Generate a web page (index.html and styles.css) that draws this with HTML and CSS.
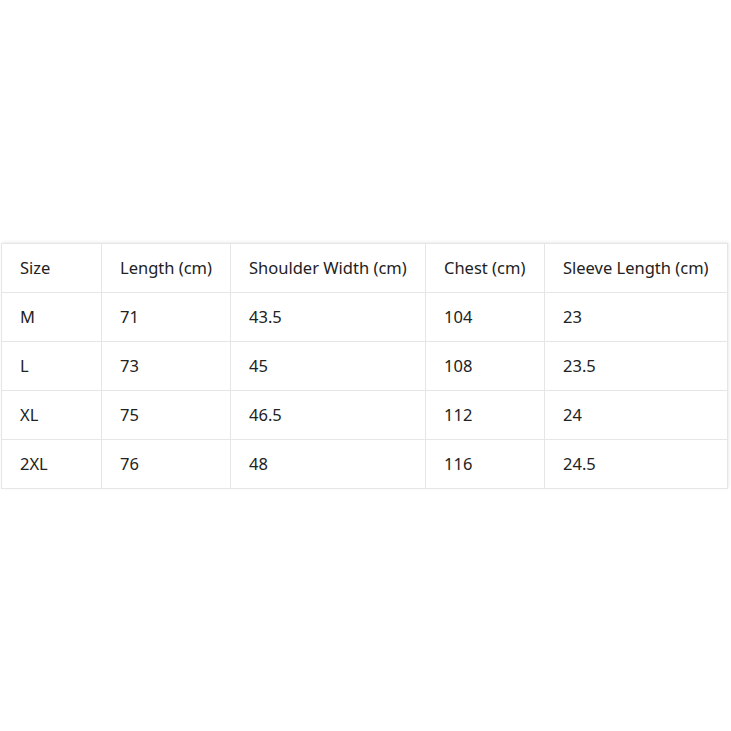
FILE: index.html
```html
<!DOCTYPE html>
<html>
<head>
<meta charset="utf-8">
<link rel="stylesheet" href="styles.css">
</head>
<body>
<div class="page">
  <table class="size-table">
    <tr><td class="c1">Size</td><td class="c2">Length (cm)</td><td class="c3">Shoulder Width (cm)</td><td class="c4">Chest (cm)</td><td class="c5">Sleeve Length (cm)</td></tr>
    <tr><td>M</td><td>71</td><td>43.5</td><td>104</td><td>23</td></tr>
    <tr><td>L</td><td>73</td><td>45</td><td>108</td><td>23.5</td></tr>
    <tr><td>XL</td><td>75</td><td>46.5</td><td>112</td><td>24</td></tr>
    <tr><td>2XL</td><td>76</td><td>48</td><td>116</td><td>24.5</td></tr>
  </table>
</div>
</body>
</html>
```
FILE: styles.css
```css
html, body {
  margin: 0;
  padding: 0;
  background: #fff;
}
.page {
  width: 731px;
  height: 731px;
  display: flex;
  align-items: center;
  padding: 0 4px 0 1px;
  box-sizing: border-box;
}
.size-table {
  border-collapse: collapse;
  width: 726px;
  table-layout: fixed;
  font-family: "Noto Sans", sans-serif;
  font-size: 16.5px;
  color: #222;
  box-shadow: 1px -1px 3px rgba(0,0,0,0.08);
}
.size-table td {
  border: 1px solid #e6e6e6;
  height: 49px;
  padding: 0 0 0 18px;
  box-sizing: border-box;
  vertical-align: middle;
  white-space: nowrap;
}
.c1 { width: 100px; }
.c2 { width: 129px; }
.c3 { width: 195px; }
.c4 { width: 119px; }
.c5 { width: 183px; }
```
